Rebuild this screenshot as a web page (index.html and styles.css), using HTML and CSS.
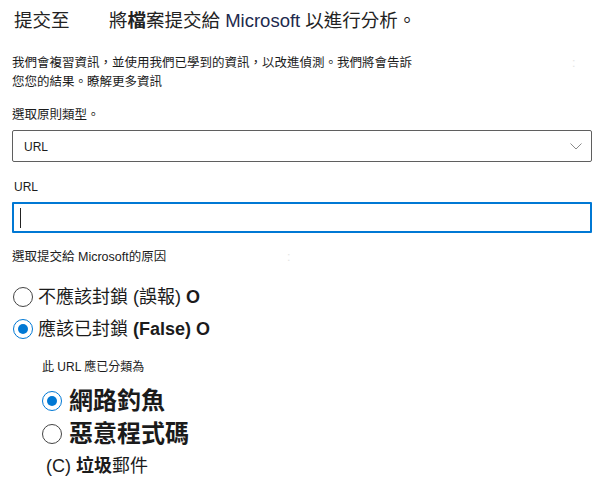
FILE: index.html
```html
<!DOCTYPE html>
<html lang="zh-Hant">
<head>
<meta charset="utf-8">
<title>提交至</title>
<link rel="stylesheet" href="styles.css">
</head>
<body>
<div class="page">
  <h1 class="title"><span class="title-lead">提交至</span><span class="title-main">將<b>檔</b>案提交給 <span class="ms">Microsoft</span> 以進行分析。</span></h1>
  <p class="intro">我們會複習資訊，並使用我們已學到的資訊，以改進偵測。我們將會告訴<span class="ghost">:</span><br>您您的結果。瞭解更多資訊</p>

  <div class="label label-type">選取原則類型。</div>
  <div class="select">
    <span class="select-value">URL</span>
    <svg class="chevron" width="12" height="7" viewBox="0 0 12 7"><path d="M0.5 0.5 L6 6 L11.5 0.5" fill="none" stroke="#8a8a8a" stroke-width="1"/></svg>
  </div>

  <div class="label label-url">URL</div>
  <div class="input"><span class="caret"></span></div>

  <div class="label label-reason">選取提交給 Microsoft的原因<span class="ghost ghost2">:</span></div>
  <div class="radios">
    <div class="radio-row"><span class="radio"></span><span class="radio-text">不應該封鎖 (誤報) <b class="o">O</b></span></div>
    <div class="radio-row"><span class="radio checked"></span><span class="radio-text">應該已封鎖 <b class="false">(False)</b> <b class="o">O</b></span></div>
  </div>

  <div class="sub">
    <div class="label label-class">此 URL 應已分類為</div>
    <div class="big-radios">
      <div class="big-row"><span class="radio checked"></span><span class="big-text">網路釣魚</span></div>
      <div class="big-row"><span class="radio"></span><span class="big-text">惡意程式碼</span></div>
    </div>
    <div class="spam">(C) <b>垃圾</b>郵件</div>
  </div>
</div>
</body>
</html>
```

FILE: styles.css
```css
html, body {
  margin: 0;
  padding: 0;
  background: #ffffff;
}
body {
  font-family: "Liberation Sans", "Noto Sans CJK TC", sans-serif;
  color: #1b1b1b;
}
.page {
  padding: 9px 19px 0 12px;
}
.title {
  margin: 0;
  font-size: 18.5px;
  line-height: 24px;
  font-weight: normal;
  display: flex;
  color: #222;
}
.title-lead {
  width: 95px;
  padding-left: 2px;
}
.title-main b {
  font-weight: bold;
}
.ms {
  color: #1d2a4e;
}
.intro {
  margin: 21px 0 0 0;
  font-size: 12.5px;
  line-height: 19px;
  position: relative;
}
.ghost {
  color: #e4e4e4;
  position: absolute;
  left: 560px;
  top: 0;
}
.label {
  font-size: 12.5px;
  line-height: 19px;
  position: relative;
}
.label-type {
  margin-top: 14px;
}
.select {
  margin-top: 5px;
  height: 32px;
  box-sizing: border-box;
  border: 1px solid #5f5f5f;
  border-radius: 2px;
  display: flex;
  align-items: center;
  justify-content: space-between;
  padding: 0 9px 0 11px;
}
.select-value {
  font-size: 12px;
  padding-top: 2px;
}
.chevron {
  display: block;
  margin-top: 1px;
}
.label-url {
  margin-top: 16px;
  font-size: 12px;
  padding-left: 2px;
}
.input {
  margin-top: 5px;
  height: 31px;
  box-sizing: border-box;
  border: 2px solid #0078d4;
  border-radius: 1px;
  display: flex;
  align-items: center;
  padding-left: 6px;
}
.caret {
  width: 1px;
  height: 20px;
  background: #222;
}
.label-reason {
  margin-top: 15px;
}
.ghost2 {
  left: 275px;
}
.radios {
  margin-top: 14px;
}
.radio-row {
  height: 32px;
  display: flex;
  align-items: center;
  gap: 5px;
  padding-left: 1px;
}
.radio {
  width: 20px;
  height: 20px;
  box-sizing: border-box;
  border: 1px solid #444;
  border-radius: 50%;
  display: flex;
  align-items: center;
  justify-content: center;
  flex: none;
}
.radio.checked {
  border-color: #0078d4;
}
.radio.checked::after {
  content: "";
  width: 10px;
  height: 10px;
  border-radius: 50%;
  background: #0078d4;
}
.radio-text {
  font-size: 18px;
  line-height: 24px;
}
.radio-text .o {
  font-weight: bold;
}
.radio-text .false {
  font-weight: bold;
}
.sub {
  padding-left: 30px;
  margin-top: 13px;
}
.label-class {
  font-size: 12px;
}
.big-radios {
  margin-top: 7px;
}
.big-row {
  height: 33px;
  display: flex;
  align-items: center;
  gap: 7px;
}
.big-text {
  font-size: 24px;
  line-height: 30px;
  font-weight: bold;
}
.spam {
  margin-top: 4px;
  padding-left: 4px;
  font-size: 18px;
  line-height: 24px;
}
.spam b {
  font-weight: bold;
}
```
